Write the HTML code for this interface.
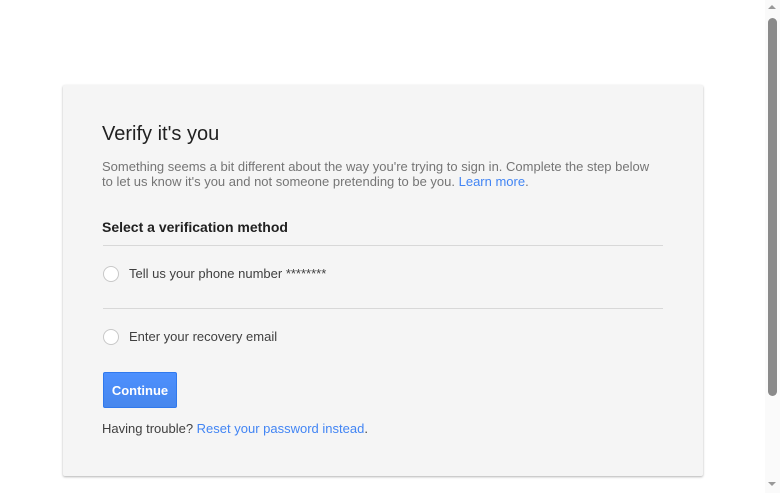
<!DOCTYPE html>
<html><head><style>
html,body{margin:0;padding:0;}
body{width:780px;height:493px;background:#fff;position:relative;overflow:hidden;font-family:"Liberation Sans",Arial,sans-serif;}
.card{position:absolute;left:63px;top:85px;width:640px;height:391px;background:#f5f5f5;box-shadow:0 1px 2px rgba(0,0,0,.3);border-radius:2px;}
.a{position:absolute;left:39px;white-space:nowrap;}
h1{position:absolute;left:39px;top:38px;margin:0;font-size:20px;font-weight:normal;color:#212121;}
.p{top:74px;font-size:13px;line-height:15px;color:#757575;}
a{color:#4285f4;text-decoration:none;}
.h{top:134px;font-size:14px;font-weight:bold;color:#212121;}
.hr{position:absolute;left:40px;width:560px;height:1px;background:#d8d8d8;}
.r{position:absolute;left:40px;width:14px;height:14px;border:1px solid #c8c8c8;border-radius:50%;background:#fff;}
.t{left:66px;font-size:13px;color:#404040;}
.btn{position:absolute;left:40px;top:287px;width:72px;height:34px;border:1px solid #3079ed;border-radius:2px;color:#fff;font-weight:bold;font-size:13px;text-align:center;line-height:36px;background:linear-gradient(#4d90fe,#4787ed);}
.sb{position:absolute;left:765px;top:0;width:15px;height:493px;background:#fafafa;}
.th{position:absolute;left:768px;top:18px;width:9px;height:378px;background:#8a8a8a;border-radius:5px;}
</style></head><body>
<div class="card">
<h1>Verify it's you</h1>
<div class="a p">Something seems a bit different about the way you're trying to sign in. Complete the step below<br>to let us know it's you and not someone pretending to be you. <a>Learn more</a>.</div>
<div class="a h">Select a verification method</div>
<div class="hr" style="top:160px"></div>
<div class="r" style="top:181px"></div>
<div class="a t" style="top:181px">Tell us your phone number ********</div>
<div class="hr" style="top:223px"></div>
<div class="r" style="top:244px"></div>
<div class="a t" style="top:244px">Enter your recovery email</div>
<div class="btn">Continue</div>
<div class="a t" style="left:39px;top:336px">Having trouble? <a>Reset your password instead</a>.</div>
</div>
<div class="sb"></div>
<div class="th"></div>
<div style="position:absolute;left:768px;top:5px;width:0;height:0;border-left:4px solid transparent;border-right:4px solid transparent;border-bottom:4px solid #999"></div>
<div style="position:absolute;left:768px;top:482px;width:0;height:0;border-left:4px solid transparent;border-right:4px solid transparent;border-top:4px solid #999"></div>
</body></html>
